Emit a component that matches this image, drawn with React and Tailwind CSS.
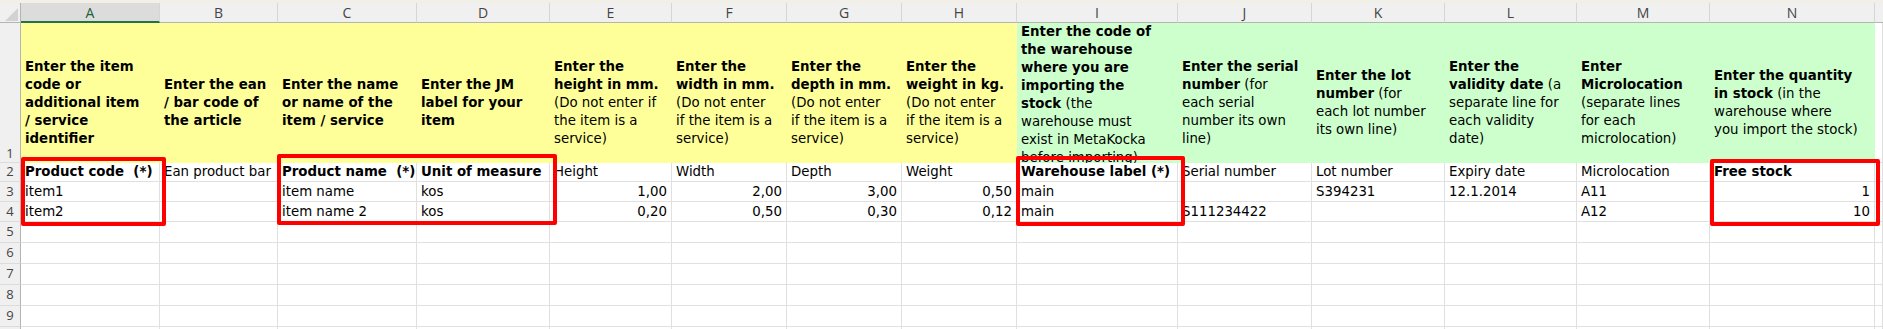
import React from 'react';

const B = ({ children }) => <span className="font-bold">{children}</span>;

const letters = ['A', 'B', 'C', 'D', 'E', 'F', 'G', 'H', 'I', 'J', 'K', 'L', 'M', 'N'];

// header text of row 1, one entry per line
const notes = [
  [<B>Enter the item</B>, <B>code or</B>, <B>additional item</B>, <B>/ service</B>, <B>identifier</B>],
  [<B>Enter the ean</B>, <B>/ bar code of</B>, <B>the article</B>],
  [<B>Enter the name</B>, <B>or name of the</B>, <B>item / service</B>],
  [<B>Enter the JM</B>, <B>label for your</B>, <B>item</B>],
  [<B>Enter the</B>, <B>height in mm.</B>, '(Do not enter if', 'the item is a', 'service)'],
  [<B>Enter the</B>, <B>width in mm.</B>, '(Do not enter', 'if the item is a', 'service)'],
  [<B>Enter the</B>, <B>depth in mm.</B>, '(Do not enter', 'if the item is a', 'service)'],
  [<B>Enter the</B>, <B>weight in kg.</B>, '(Do not enter', 'if the item is a', 'service)'],
  [
    <B>Enter the code of</B>,
    <B>the warehouse</B>,
    <B>where you are</B>,
    <B>importing the</B>,
    <><B>stock</B> (the</>,
    'warehouse must',
    'exist in MetaKocka',
    'before importing)',
  ],
  [<B>Enter the serial</B>, <><B>number</B> (for</>, 'each serial', 'number its own', 'line)'],
  [<B>Enter the lot</B>, <><B>number</B> (for</>, 'each lot number', 'its own line)'],
  [<B>Enter the</B>, <><B>validity date</B> (a</>, 'separate line for', 'each validity', 'date)'],
  [<B>Enter</B>, <B>Microlocation</B>, '(separate lines', 'for each', 'microlocation)'],
  [<B>Enter the quantity</B>, <><B>in stock</B> (in the</>, 'warehouse where', 'you import the stock)'],
];

// [text, bold, rightAligned]
const rows = [
  [
    ['Product code  (*)', true], ['Ean product bar'], ['Product name  (*)', true], ['Unit of measure', true],
    ['Height'], ['Width'], ['Depth'], ['Weight'], ['Warehouse label (*)', true], ['Serial number'],
    ['Lot number'], ['Expiry date'], ['Microlocation'], ['Free stock', true],
  ],
  [
    ['item1'], [''], ['item name'], ['kos'], ['1,00', false, true], ['2,00', false, true], ['3,00', false, true],
    ['0,50', false, true], ['main'], [''], ['S394231'], ['12.1.2014'], ['A11'], ['1', false, true],
  ],
  [
    ['item2'], [''], ['item name 2'], ['kos'], ['0,20', false, true], ['0,50', false, true], ['0,30', false, true],
    ['0,12', false, true], ['main'], ['S111234422'], [''], [''], ['A12'], ['10', false, true],
  ],
];

const RowNum = ({ n, end }) => (
  <div
    className={`flex justify-center bg-[#f0f0f0] border-r border-r-[#b4b4b4] border-b border-b-[#dcdcdc] text-[13px] text-[#444] font-['Open_Sans'] ${
      end ? 'items-end leading-[18px]' : 'items-center'
    }`}
  >
    {n}
  </div>
);

const Cell = ({ text = '', bold, right }) => (
  <div
    className={`flex items-center overflow-hidden whitespace-pre border-r border-b border-[#e0e0e0] px-[4px] leading-[18px] ${
      right ? 'justify-end' : ''
    } ${bold ? 'font-bold' : ''}`}
  >
    {text}
  </div>
);

const Empty = () => <div className="border-r border-b border-[#e0e0e0]" />;

export default function App() {
  return (
    <div className="relative w-[1883px] h-[329px] overflow-hidden bg-white text-black font-['DejaVu_Sans',sans-serif] text-[13.33px]">
      <div className="h-[3px] bg-[#f2efe6]" />
      <div className="grid grid-cols-[21px_139px_118px_139px_133px_122px_115px_115px_115px_161px_134px_133px_132px_133px_165px_1fr] grid-rows-[20px_140px_19px_20px_20px_21px_21px_21px_21px_21px_21px]">
        {/* column letters */}
        <div className="relative bg-[#f0f0f0] border-r border-r-[#b4b4b4] border-b border-b-[#b4b4b4]">
          <svg className="absolute left-[5px] top-[5px]" width="13" height="13" viewBox="0 0 13 13">
            <polygon points="13,0 13,13 0,13" fill="#d2d2d2" />
          </svg>
        </div>
        {letters.map((l, i) => (
          <div
            key={l}
            className={`flex items-center justify-center text-[14px] font-['Open_Sans'] border-r border-r-[#d6d6d6] ${
              i === 0
                ? 'bg-[#dcdcdc] text-[#1d5e3a] border-b-2 border-b-[#217346]'
                : 'bg-[#f0f0f0] text-[#444] border-b border-b-[#b4b4b4]'
            }`}
          >
            {l}
          </div>
        ))}
        <div className="bg-[#f0f0f0] border-b border-b-[#b4b4b4]" />

        {/* row 1: instructions */}
        <RowNum n={1} end />
        {notes.map((lines, i) => (
          <div
            key={i}
            className={`flex flex-col overflow-hidden px-[4px] leading-[18px] ${i < 8 ? 'bg-[#ffff99]' : 'bg-[#ccffcc]'} ${
              i === 8 ? 'justify-start' : 'justify-center pt-[20px]'
            }`}
          >
            {lines.map((line, j) => (
              <div key={j} className="whitespace-nowrap">
                {line}
              </div>
            ))}
          </div>
        ))}
        <Empty />

        {/* data rows */}
        {rows.map((r, ri) => (
          <React.Fragment key={ri}>
            <RowNum n={ri + 2} />
            {r.map(([text, bold, right], ci) => (
              <Cell key={ci} text={text} bold={bold} right={right} />
            ))}
            <Empty />
          </React.Fragment>
        ))}

        {[5, 6, 7, 8, 9, ''].map((n, k) => (
          <React.Fragment key={k}>
            <RowNum n={n} />
            {letters.map((l) => (
              <Empty key={l} />
            ))}
            <Empty />
          </React.Fragment>
        ))}
      </div>

      {/* red highlight boxes */}
      <div className="absolute left-[21px] top-[157px] w-[145px] h-[69px] border-4 border-[#ff0000] rounded-[2px]" />
      <div className="absolute left-[277px] top-[154px] w-[280px] h-[71px] border-4 border-[#ff0000] rounded-[2px]" />
      <div className="absolute left-[1016px] top-[156px] w-[169px] h-[70px] border-4 border-[#ff0000] rounded-[2px]" />
      <div className="absolute left-[1710px] top-[159px] w-[170px] h-[67px] border-4 border-[#ff0000] rounded-[2px]" />
    </div>
  );
}
